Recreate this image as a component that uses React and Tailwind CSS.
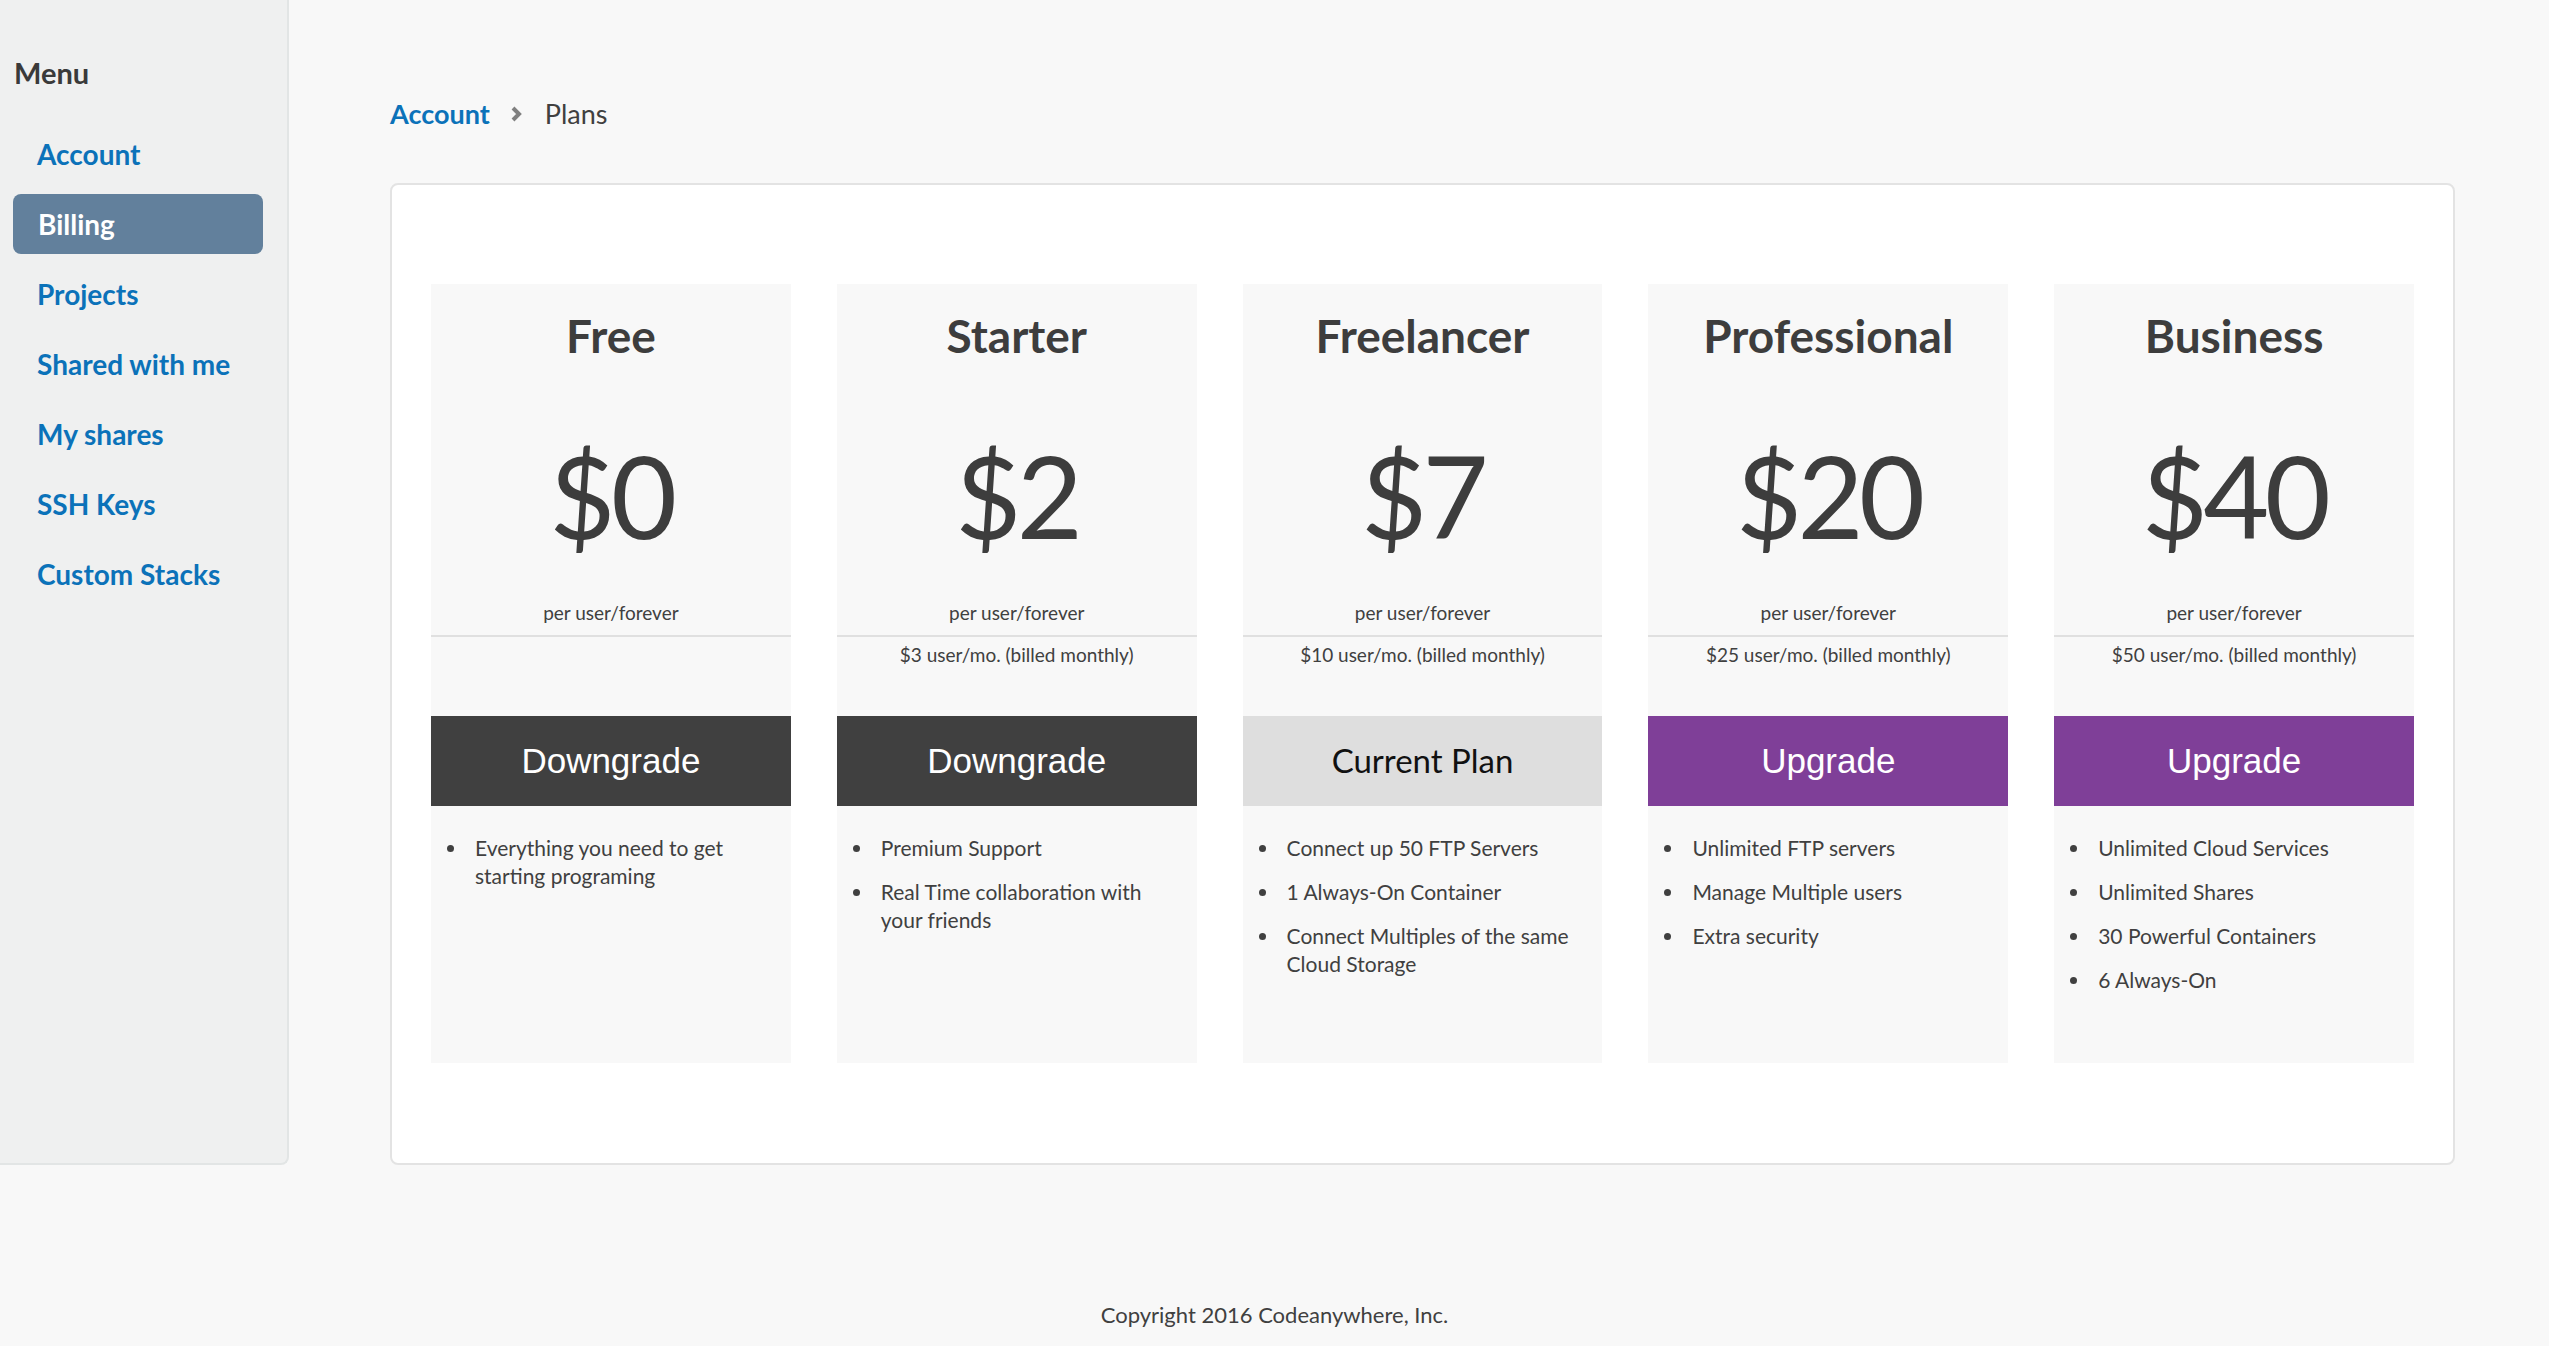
import React from "react";

const plans = [
  {
    name: "Free",
    price: "$0",
    monthly: "",
    button: "Downgrade",
    kind: "down",
    features: ["Everything you need to get starting programing"],
  },
  {
    name: "Starter",
    price: "$2",
    monthly: "$3 user/mo. (billed monthly)",
    button: "Downgrade",
    kind: "down",
    features: ["Premium Support", "Real Time collaboration with your friends"],
  },
  {
    name: "Freelancer",
    price: "$7",
    monthly: "$10 user/mo. (billed monthly)",
    button: "Current Plan",
    kind: "current",
    features: [
      "Connect up 50 FTP Servers",
      "1 Always-On Container",
      "Connect Multiples of the same Cloud Storage",
    ],
  },
  {
    name: "Professional",
    price: "$20",
    monthly: "$25 user/mo. (billed monthly)",
    button: "Upgrade",
    kind: "up",
    features: ["Unlimited FTP servers", "Manage Multiple users", "Extra security"],
  },
  {
    name: "Business",
    price: "$40",
    monthly: "$50 user/mo. (billed monthly)",
    button: "Upgrade",
    kind: "up",
    features: [
      "Unlimited Cloud Services",
      "Unlimited Shares",
      "30 Powerful Containers",
      "6 Always-On",
    ],
  },
];

const menu = ["Account", "Billing", "Projects", "Shared with me", "My shares", "SSH Keys", "Custom Stacks"];

function PlanButton({ kind, label }) {
  if (kind === "current") {
    return (
      <div className="h-[90px] bg-[#dedede] flex items-center justify-center text-[33px] text-[#111111] font-['Lato',sans-serif]">
        {label}
      </div>
    );
  }
  const bg = kind === "up" ? "bg-[#7f3f98]" : "bg-[#404040]";
  return (
    <div
      className={`h-[90px] ${bg} flex items-center justify-center text-[35px] text-white font-['Liberation_Sans',Arial,sans-serif]`}
    >
      {label}
    </div>
  );
}

function Plan({ plan }) {
  return (
    <div className="bg-[#f8f8f8] h-[779px] flex flex-col font-['Lato',sans-serif] text-[#404040]">
      <div className="mt-[24px] h-[56px] leading-[56px] text-center text-[46px] font-bold text-[#3d3d3d]">
        {plan.name}
      </div>
      <div className="mt-[71px] h-[120px] leading-[120px] text-center text-[114px] text-[#3d3d3d] tracking-[-0.04em]">
        {plan.price}
      </div>
      <div className="mt-[44px] h-[28px] leading-[28px] text-center text-[19px]">per user/forever</div>
      <div className="mt-[8px] h-[2px] bg-[#e0e0e0]" />
      <div className="mt-[4px] h-[28px] leading-[28px] text-center text-[19px]">{plan.monthly}</div>
      <div className="mt-[47px]">
        <PlanButton kind={plan.kind} label={plan.button} />
      </div>
      <ul className="pt-[28px] pl-[16px] pr-[20px] flex flex-col gap-[16px]">
        {plan.features.map((f) => (
          <li key={f} className="flex items-start text-[21px] leading-[28px]">
            <span className="h-[28px] w-[7px] flex items-center shrink-0">
              <span className="w-[7px] h-[7px] rounded-full bg-[#404040]" />
            </span>
            <span className="ml-[21px]">{f}</span>
          </li>
        ))}
      </ul>
    </div>
  );
}

export default function App() {
  return (
    <div className="min-h-screen w-full bg-[#f8f8f8] flex flex-col">
      <div className="flex">
        <aside className="w-[289px] h-[1165px] shrink-0 bg-[#eff0f0] border-r-2 border-b-2 border-[#e2e5e5] rounded-br-[8px] pl-[13px] pr-[24px] font-['Lato',sans-serif]">
          <div className="mt-[53px] h-[40px] leading-[40px] pl-[1px] text-[29px] font-bold text-[#3a3a3a]">Menu</div>
          <nav className="mt-[31px] flex flex-col gap-[10px]">
            {menu.map((m) => (
              <div
                key={m}
                className={
                  m === "Billing"
                    ? "h-[60px] rounded-[8px] bg-[#62809c] text-white pl-[25px] flex items-center text-[28px] font-bold"
                    : "h-[60px] rounded-[8px] text-[#0b72b9] pl-[24px] flex items-center text-[28px] font-bold"
                }
              >
                {m}
              </div>
            ))}
          </nav>
        </aside>
        <main className="flex-1 pl-[101px] pr-[94px] font-['Lato',sans-serif]">
          <div className="mt-[94px] h-[40px] flex items-center text-[27px]">
            <span className="font-bold text-[#0b72b9]">Account</span>
            <svg className="ml-[20px]" width="13" height="16" viewBox="0 0 13 16">
              <polyline points="3,2 9,8 3,14" fill="none" stroke="#808080" strokeWidth="4" />
            </svg>
            <span className="ml-[22px] text-[#404040]">Plans</span>
          </div>
          <div className="mt-[49px] h-[982px] bg-white border-2 border-[#e3e3e3] rounded-[8px] px-[39px] pt-[99px]">
            <div className="grid grid-cols-5 gap-[46px]">
              {plans.map((p) => (
                <Plan key={p.name} plan={p} />
              ))}
            </div>
          </div>
        </main>
      </div>
      <footer className="mt-[135px] h-[30px] leading-[30px] flex justify-center text-[22px] text-[#404040] font-['Lato',sans-serif]">
        Copyright 2016 Codeanywhere, Inc.
      </footer>
    </div>
  );
}
